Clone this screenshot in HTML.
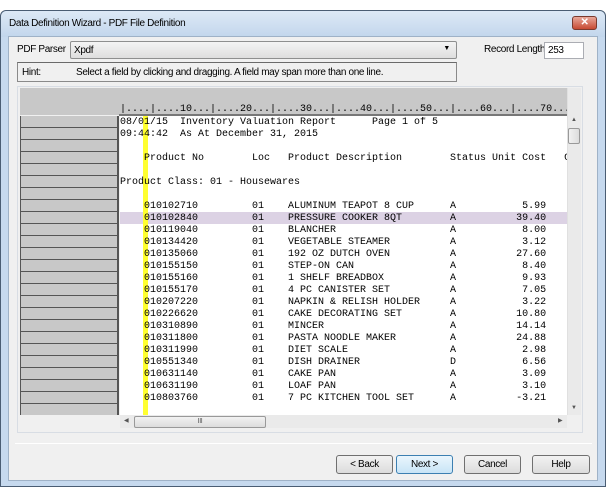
<!DOCTYPE html>
<html><head><style>
body{margin:0;width:606px;height:487px;background:#fff;position:relative;overflow:hidden;font-family:"Liberation Sans",sans-serif;font-size:10px;letter-spacing:-0.35px;}
.a{position:absolute;box-sizing:border-box;}
pre{margin:0;font-family:"Liberation Mono",monospace;font-size:10px;line-height:12px;color:#000;letter-spacing:0;}
.btn{position:absolute;box-sizing:border-box;height:19px;top:455px;border:1px solid #707070;border-radius:3px;background:linear-gradient(#f2f2f2,#dcdcdc);text-align:center;line-height:17px;font-size:10px;}
</style></head><body>
<div class="a" style="left:0;top:10px;width:606px;height:477px;background:#c6d9ee;border:1px solid #4a5d73;border-radius:6px 6px 0 0;"></div>
<div class="a" style="left:1px;top:11px;width:604px;height:26px;background:linear-gradient(#dde9f6,#c2d6ec);border-radius:6px 6px 0 0;"></div>
<div class="a" style="left:9px;top:18px;font-size:10px;color:#000;">Data Definition Wizard - PDF File Definition</div>
<div class="a" style="left:572px;top:16px;width:25px;height:14px;background:linear-gradient(#e8a89a,#c74a33);border:1px solid #7a3a2e;border-radius:3px;color:#fff;font-weight:bold;font-size:10px;text-align:center;line-height:12px;">✕</div>
<div class="a" style="left:8px;top:36px;width:590px;height:445px;background:#f0f0f0;border:1px solid #9fb2c7;"></div>
<div class="a" style="left:17px;top:44px;">PDF Parser</div>
<div class="a" style="left:70px;top:41px;width:387px;height:18px;border:1px solid #8e8f8f;border-radius:2px;background:linear-gradient(#f4f4f4,#dedede);padding:3px 3px;">Xpdf<span style="position:absolute;right:6px;top:3px;font-size:7px;">▼</span></div>
<div class="a" style="left:484px;top:44px;">Record Length</div>
<div class="a" style="left:544px;top:42px;width:40px;height:17px;border:1px solid #abadb3;background:#fff;padding:2px 3px;">253</div>
<div class="a" style="left:17px;top:62px;width:440px;height:20px;border:1px solid #8a8a8a;border-top-color:#6a6a6a;padding:4px 4px;">Hint:<span style="position:absolute;left:58px;top:4px;">Select a field by clicking and dragging. A field may span more than one line.</span></div>
<div class="a" style="left:17px;top:86px;width:566px;height:347px;border:1px solid #d8dde4;background:#f0f0f0;"></div>
<div class="a" style="left:20px;top:88px;width:547px;height:27px;background:#c8c8c8;"></div>
<div class="a" style="left:120px;top:104px;width:447px;overflow:hidden;"><pre>|....|....10...|....20...|....30...|....40...|....50...|....60...|....70...|....</pre></div>
<div class="a" style="left:119px;top:114px;width:448px;height:2px;background:#777;"></div>
<div class="a" style="left:120px;top:116px;width:447px;height:299px;background:#fff;"></div>
<div class="a" style="left:120px;top:212px;width:447px;height:12px;background:#dcd2e4;"></div>
<div class="a" style="left:143px;top:116px;width:5px;height:311px;background:#ffff30;"></div>
<div class="a" style="left:20px;top:116px;width:99px;height:299px;background:repeating-linear-gradient(#c8c8c8 0,#c8c8c8 11px,#555 11px,#555 12px);border-left:1px solid #555;border-right:2px solid #555;"></div>
<div class="a" style="left:120px;top:117px;width:447px;height:298px;overflow:hidden;"><pre>08/01/15  Inventory Valuation Report      Page 1 of 5
09:44:42  As At December 31, 2015

    Product No        Loc   Product Description        Status Unit Cost   C

Product Class: 01 - Housewares

    010102710         01    ALUMINUM TEAPOT 8 CUP      A           5.99
    010102840         01    PRESSURE COOKER 8QT        A          39.40
    010119040         01    BLANCHER                   A           8.00
    010134420         01    VEGETABLE STEAMER          A           3.12
    010135060         01    192 OZ DUTCH OVEN          A          27.60
    010155150         01    STEP-ON CAN                A           8.40
    010155160         01    1 SHELF BREADBOX           A           9.93
    010155170         01    4 PC CANISTER SET          A           7.05
    010207220         01    NAPKIN &amp; RELISH HOLDER     A           3.22
    010226620         01    CAKE DECORATING SET        A          10.80
    010310890         01    MINCER                     A          14.14
    010311800         01    PASTA NOODLE MAKER         A          24.88
    010311990         01    DIET SCALE                 A           2.98
    010551340         01    DISH DRAINER               D           6.56
    010631140         01    CAKE PAN                   A           3.09
    010631190         01    LOAF PAN                   A           3.10
    010803760         01    7 PC KITCHEN TOOL SET      A          -3.21</pre></div>
<div class="a" style="left:567px;top:88px;width:14px;height:327px;background:#eaeaea;border-left:1px solid #e0e0e0;"></div>
<div class="a" style="left:571px;top:117px;font-size:6px;color:#555;">▲</div>
<div class="a" style="left:571px;top:405px;font-size:6px;color:#555;">▼</div>
<div class="a" style="left:568px;top:128px;width:12px;height:16px;border:1px solid #999;border-radius:2px;background:linear-gradient(90deg,#f2f2f2,#dcdcdc);"></div>
<div class="a" style="left:120px;top:415px;width:447px;height:13px;background:#eaeaea;"></div>
<div class="a" style="left:124px;top:417px;font-size:6px;color:#555;">◀</div>
<div class="a" style="left:558px;top:417px;font-size:6px;color:#555;">▶</div>
<div class="a" style="left:134px;top:416px;width:132px;height:12px;border:1px solid #999;border-radius:2px;background:linear-gradient(#f2f2f2,#dcdcdc);text-align:center;font-size:7px;line-height:10px;color:#555;">III</div>
<div class="a" style="left:15px;top:443px;width:577px;height:1px;background:#a0a0a0;border-bottom:1px solid #fff;"></div>
<div class="btn" style="left:336px;width:57px;">&lt; Back</div>
<div class="btn" style="left:396px;width:57px;border-color:#3c7fb1;background:linear-gradient(#eaf6fd,#c8e4f6);">Next &gt;</div>
<div class="btn" style="left:464px;width:57px;">Cancel</div>
<div class="btn" style="left:532px;width:58px;">Help</div>
</body></html>
